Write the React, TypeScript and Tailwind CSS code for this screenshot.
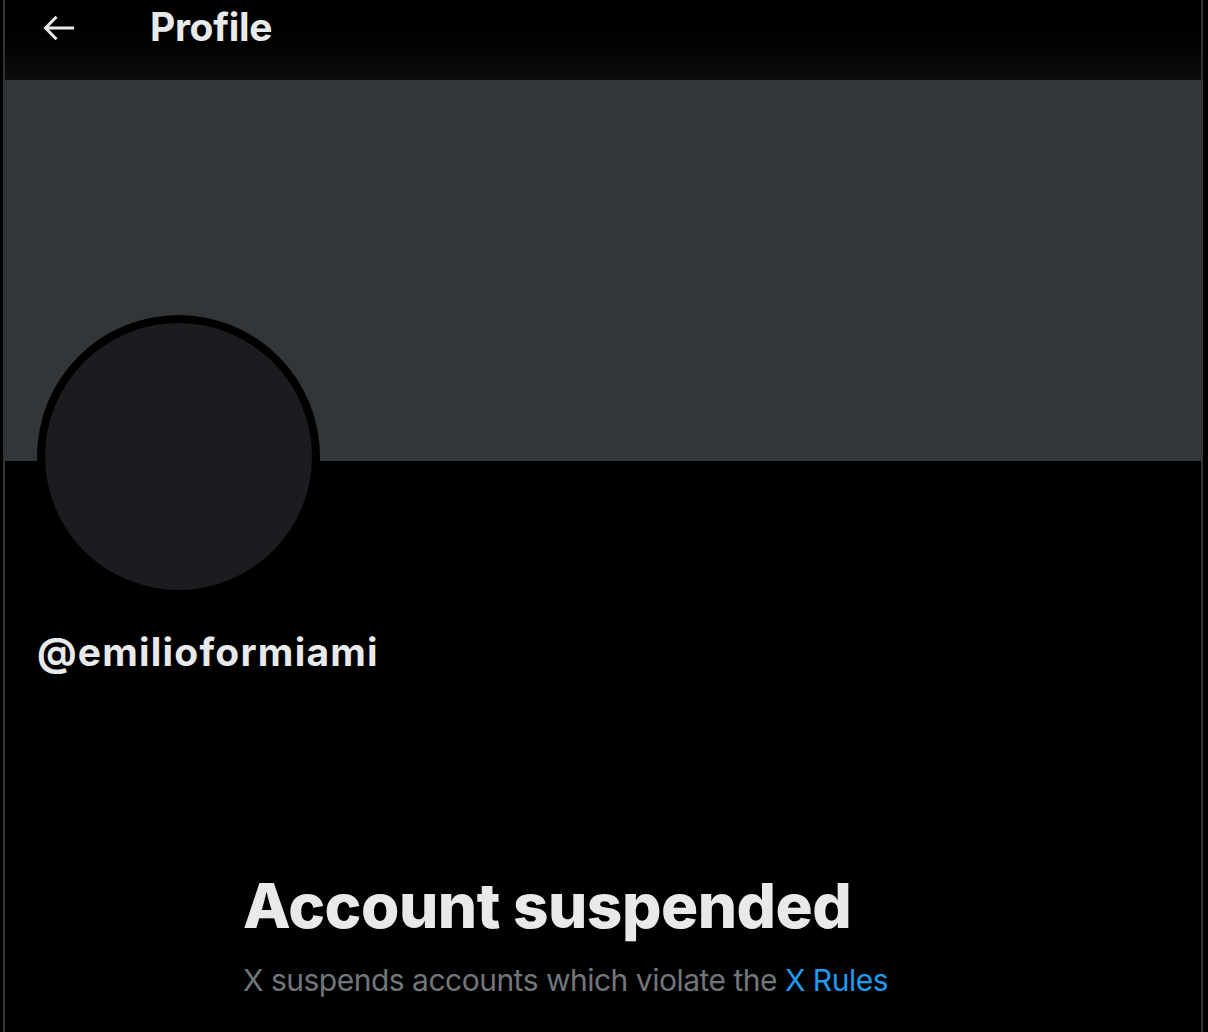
import React from 'react';

function BackArrow() {
  return (
    <svg viewBox="0 0 32 26" width="32" height="26" fill="none" stroke="#e7e9ea" strokeWidth="3" strokeLinecap="butt">
      <path d="M2.5 13H31" />
      <path d="M13.5 1.8L2.5 13l11 11.2" />
    </svg>
  );
}

export default function App() {
  return (
    <div className="min-h-screen bg-black pl-[3px] pr-[5px] font-['Inter',sans-serif] text-[#e7e9ea]">
      <div className="min-h-[1032px] border-x-2 border-[#2f3336]">
        {/* Header */}
        <header className="h-[80px] flex items-start bg-gradient-to-b from-black to-[#0d0e0e]">
          <button className="ml-[34px] mt-[8px] w-[40px] h-[40px] flex items-center justify-center">
            <BackArrow />
          </button>
          <h1 className="ml-[71px] mt-[3px] text-[39px] leading-[48px] font-bold tracking-[-0.3px]">Profile</h1>
        </header>

        {/* Banner */}
        <div className="h-[381px] bg-[#333639] -mr-[2px]" />

        {/* Avatar */}
        <div className="ml-[32px] -mt-[146px] w-[283px] h-[283px] rounded-full bg-black p-[8px] relative">
          <div className="w-full h-full rounded-full bg-[#1b1c1f]" />
        </div>

        {/* Handle */}
        <div className="ml-[32px] mt-[32px] text-[39px] font-bold leading-[44px] tracking-[1.2px]">
          @emilioformiami
        </div>

        {/* Suspended notice */}
        <div className="ml-[238px] mt-[196px]">
          <h2 className="text-[62px] font-extrabold leading-[72px] tracking-[-0.5px]">Account suspended</h2>
          <p className="mt-[18px] text-[30px] leading-[40px] tracking-[-0.5px] text-[#71767b]">
            X suspends accounts which violate the{' '}
            <a href="#" className="text-[#1d9bf0]">X Rules</a>
          </p>
        </div>
      </div>
    </div>
  );
}
